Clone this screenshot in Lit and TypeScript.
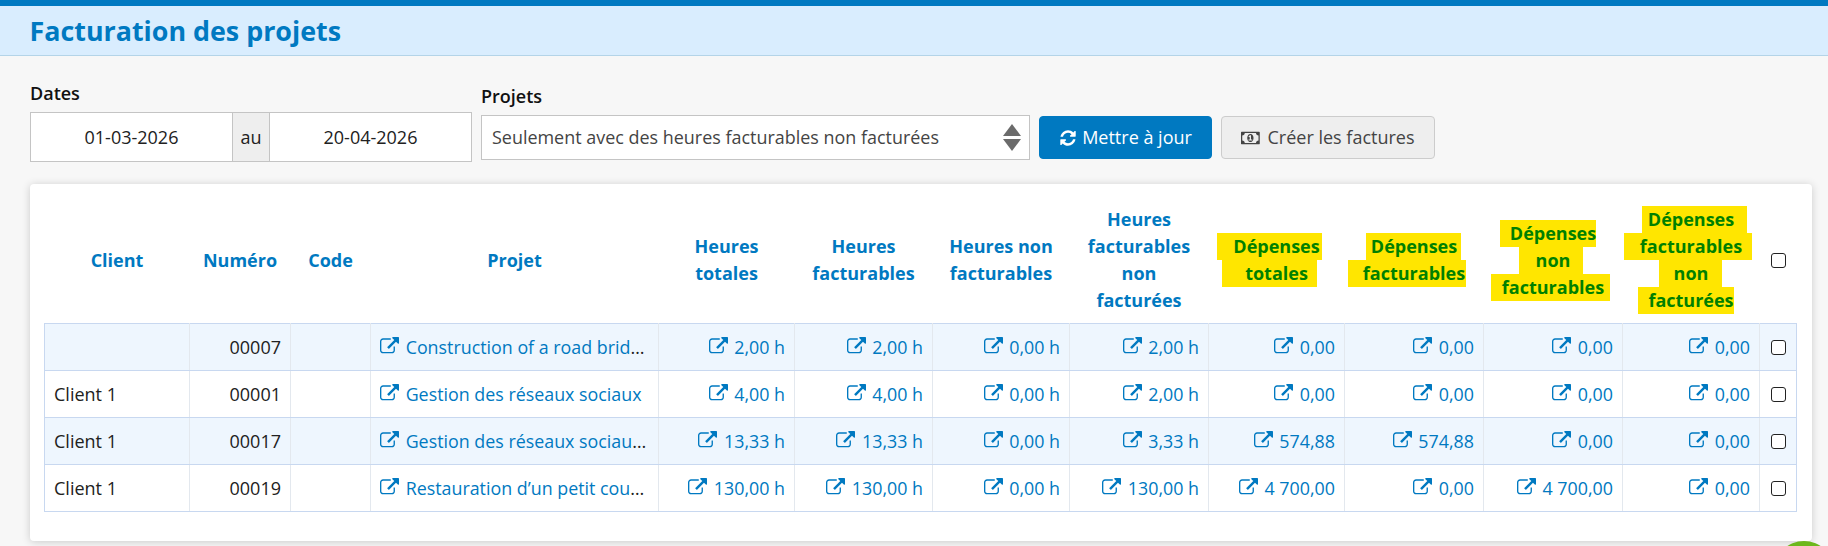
import { LitElement, html, css, svg } from 'lit';
import { customElement } from 'lit/decorators.js';

const EXT = svg`<path d="M1408 928v320q0 119-84.5 203.5t-203.5 84.5h-832q-119 0-203.5-84.5t-84.5-203.5v-832q0-119 84.5-203.5t203.5-84.5h704q14 0 23 9t9 23v64q0 14-9 23t-23 9h-704q-66 0-113 47t-47 113v832q0 66 47 113t113 47h832q66 0 113-47t47-113v-320q0-14 9-23t23-9h64q14 0 23 9t9 23zm384-864v512q0 26-19 45t-45 19-45-19l-176-176-652 652q-10 10-23 10t-23-10l-114-114q-10-10-10-23t10-23l652-652-176-176q-19-19-19-45t19-45 45-19h512q26 0 45 19t19 45z"/>`;
const REFRESH = svg`<path d="M1639 1056q0 5-1 7-64 268-268 434.5t-478 166.5q-146 0-282.5-55t-243.5-157l-129 129q-19 19-45 19t-45-19-19-45v-448q0-26 19-45t45-19h448q26 0 45 19t19 45-19 45l-137 137q71 66 161 102t187 36q134 0 250-65t186-179q11-17 53-117 8-23 30-23h192q13 0 22.5 9.5t9.5 22.5zm25-800v448q0 26-19 45t-45 19h-448q-26 0-45-19t-19-45 19-45l138-138q-148-137-349-137-134 0-250 65t-186 179q-11 17-53 117-8 23-30 23h-199q-13 0-22.5-9.5t-9.5-22.5v-7q65-268 270-434.5t480-166.5q146 0 284 55.5t245 156.5l130-129q19-19 45-19t45 19 19 45z"/>`;
const MONEY = svg`<path d="M768 1152h384v-96h-128v-448h-114l-148 137 77 80q42-37 55-57h2v288h-128v96zm512-256q0 70-21 142t-59.5 134-101.5 101-138 39-138-39-101.5-101-59.5-134-21-142 21-142 59.5-134 101.5-101 138-39 138 39 101.5 101 59.5 134 21 142zm512 256v-512q-106 0-181-75t-75-181h-1152q0 106-75 181t-181 75v512q106 0 181 75t75 181h1152q0-106 75-181t181-75zm128-832v1152q0 26-19 45t-45 19h-1792q-26 0-45-19t-19-45v-1152q0-26 19-45t45-19h1792q26 0 45 19t19 45z"/>`;

const WIDTHS = [145, 101, 80, 288, 136, 138, 137, 139, 136, 139, 139, 137, 37];

const HOURS = ['Heures totales', 'Heures facturables', 'Heures non facturables', 'Heures facturables non facturées'];

// [text, yellow past the left of the word, yellow past the right of the word]
const EXPENSES: [string, number, number][][] = [
  [['Dépenses', 16, 2], ['totales', 23, 9]],
  [['Dépenses', 5, 4], ['facturables', 15, 1]],
  [['Dépenses', 10, 0], ['non', 17, 13], ['facturables', 11, 6]],
  [['Dépenses', 6, 13], ['facturables', 16, 10], ['non', 15, 14], ['facturées', 10, 0]],
];

const ROWS = [
  { client: '', num: '00007', name: 'Construction of a road bridge', vals: ['2,00 h', '2,00 h', '0,00 h', '2,00 h', '0,00', '0,00', '0,00', '0,00'] },
  { client: 'Client 1', num: '00001', name: 'Gestion des réseaux sociaux', vals: ['4,00 h', '4,00 h', '0,00 h', '2,00 h', '0,00', '0,00', '0,00', '0,00'] },
  { client: 'Client 1', num: '00017', name: 'Gestion des réseaux sociaux 2', vals: ['13,33 h', '13,33 h', '0,00 h', '3,33 h', '574,88', '574,88', '0,00', '0,00'] },
  { client: 'Client 1', num: '00019', name: 'Restauration d’un petit cours d’eau', vals: ['130,00 h', '130,00 h', '0,00 h', '130,00 h', '4 700,00', '0,00', '4 700,00', '0,00'] },
];

@customElement('app-root')
export class AppRoot extends LitElement {
  static styles = css`
    :host {
      display: block;
      height: 546px;
      overflow: hidden;
      background: #f7f7f7;
      font-family: 'Open Sans', 'Noto Sans', sans-serif;
      font-size: 18px;
      line-height: 27px;
      color: #212121;
      position: relative;
    }
    .top {
      height: 49px;
      border-top: 6px solid #0079c1;
      border-bottom: 1px solid #b4d4e8;
      background: #d9edfe;
      padding: 0 29.5px;
      display: flex;
      align-items: center;
    }
    h1 {
      margin: 0;
      font-size: 26.85px;
      font-weight: 700;
      color: #0079c1;
    }
    .filters {
      display: flex;
      align-items: flex-start;
      padding: 24px 30px 0;
    }
    label {
      display: block;
      font-weight: 600;
      color: #111;
      margin-bottom: 5px;
    }
    .dates {
      margin-right: 9px;
    }
    .range {
      display: flex;
      height: 50px;
      width: 442px;
      box-sizing: border-box;
      border: 1px solid #c4c4c4;
      background: #fff;
    }
    .range input {
      border: none;
      outline: none;
      min-width: 0;
      padding: 0;
      font: inherit;
      color: #212121;
      text-align: center;
      background: #fff;
    }
    .range .from { width: 201px; }
    .range .to { flex: 1; }
    .au {
      width: 36px;
      display: flex;
      align-items: center;
      justify-content: center;
      background: #eee;
      border-left: 1px solid #c4c4c4;
      border-right: 1px solid #c4c4c4;
    }
    .projects {
      margin-top: 3px;
      margin-right: 9px;
    }
    .select-wrap {
      position: relative;
      width: 549px;
      height: 45px;
    }
    select {
      appearance: none;
      width: 100%;
      height: 100%;
      box-sizing: border-box;
      border: 1px solid #c4c4c4;
      border-radius: 0;
      background: #fff;
      font: inherit;
      font-size: 17.95px;
      color: #444;
      padding: 0 40px 0 10px;
    }
    .arrows {
      position: absolute;
      right: 8px;
      top: 9px;
      pointer-events: none;
    }
    .btn {
      display: flex;
      align-items: center;
      justify-content: center;
      gap: 6px;
      box-sizing: border-box;
      height: 43px;
      margin-top: 36px;
      border-radius: 4px;
      font: inherit;
      padding: 0;
    }
    .btn.primary {
      width: 173px;
      margin-right: 9px;
      background: #0079c1;
      border: 1px solid #0079c1;
      color: #fff;
      font-weight: 500;
      gap: 5px;
    }
    .btn.secondary {
      width: 214px;
      background: #eee;
      border: 1px solid #ccc;
      color: #444;
    }
    .card {
      position: absolute;
      left: 30px;
      top: 184px;
      width: 1782px;
      height: 357px;
      box-sizing: border-box;
      padding: 13px 15px 0 14px;
      background: #fff;
      border-radius: 4px;
      box-shadow: 0 1px 8px rgba(0, 0, 0, 0.18);
    }
    table {
      border-collapse: collapse;
      table-layout: fixed;
      width: 1752px;
    }
    th {
      padding: 9px 10px;
      height: 108px;
      color: #0079c1;
      font-weight: 700;
      text-align: center;
      vertical-align: middle;
    }
    th:last-child { padding: 0; }
    .hl {
      display: block;
      width: fit-content;
      margin: 0 auto;
      background: #ffe600;
      color: #008000;
      white-space: nowrap;
    }
    td {
      height: 47px;
      box-sizing: border-box;
      padding: 0 9px;
      border: 1px solid #e3e8ee;
      border-top-color: #c8d8f0;
      border-bottom-color: #c8d8f0;
      white-space: nowrap;
      overflow: hidden;
      text-overflow: ellipsis;
    }
    td:first-child { border-left-color: #c8d8f0; }
    td:last-child { border-right-color: #c8d8f0; padding: 0; }
    tbody tr:nth-child(odd) td { background: #eef6fe; }
    .r { text-align: right; }
    a {
      color: #0079c1;
      text-decoration: none;
      font-size: 17.85px;
    }
    a svg {
      width: 19px;
      height: 19px;
      fill: #0079c1;
      vertical-align: -2px;
      margin-right: 2px;
    }
    input[type='checkbox'] {
      appearance: none;
      display: block;
      width: 15px;
      height: 15px;
      margin: 0 auto;
      border: 1.5px solid #222;
      border-radius: 3px;
      background: #fff;
    }
    .bubble {
      position: absolute;
      left: 1774px;
      top: 541px;
      width: 60px;
      height: 60px;
      border-radius: 50%;
      background: #6cb81c;
    }
  `;

  private link(text: string) {
    return html`<a href="#"><svg viewBox="0 0 1792 1792">${EXT}</svg> ${text}</a>`;
  }

  render() {
    return html`
      <div class="top"><h1>Facturation des projets</h1></div>
      <div class="filters">
        <div class="dates">
          <label>Dates</label>
          <div class="range">
            <input class="from" value="01-03-2026" />
            <span class="au">au</span>
            <input class="to" value="20-04-2026" />
          </div>
        </div>
        <div class="projects">
          <label>Projets</label>
          <div class="select-wrap">
            <select><option>Seulement avec des heures facturables non facturées</option></select>
            <svg class="arrows" width="20" height="27" viewBox="0 0 20 27" fill="#6b6b6b">
              <path d="M10 0 19 12H1z" /><path d="M1 15H19L10 27z" />
            </svg>
          </div>
        </div>
        <button class="btn primary">
          <svg width="18" height="18" viewBox="0 0 1792 1792" fill="#fff">${REFRESH}</svg>Mettre à jour
        </button>
        <button class="btn secondary">
          <svg width="20" height="18" viewBox="0 0 2048 1792" fill="#444">${MONEY}</svg>Créer les factures
        </button>
      </div>
      <div class="card">
        <table>
          <colgroup>${WIDTHS.map((w) => html`<col style="width:${w}px" />`)}</colgroup>
          <thead>
            <tr>
              <th>Client</th>
              <th>Numéro</th>
              <th>Code</th>
              <th>Projet</th>
              ${HOURS.map((h) => html`<th>${h}</th>`)}
              ${EXPENSES.map(
                (lines) => html`<th>
                  ${lines.map(
                    ([t, l, r]) =>
                      html`<span class="hl" style="box-shadow:${-l}px 0 0 #ffe600,${r}px 0 0 #ffe600">${t}</span>`
                  )}
                </th>`
              )}
              <th><input type="checkbox" /></th>
            </tr>
          </thead>
          <tbody>
            ${ROWS.map(
              (r) => html`<tr>
                <td>${r.client}</td>
                <td class="r">${r.num}</td>
                <td></td>
                <td>${this.link(r.name)}</td>
                ${r.vals.map((v) => html`<td class="r">${this.link(v)}</td>`)}
                <td><input type="checkbox" /></td>
              </tr>`
            )}
          </tbody>
        </table>
      </div>
      <div class="bubble"></div>
    `;
  }
}
